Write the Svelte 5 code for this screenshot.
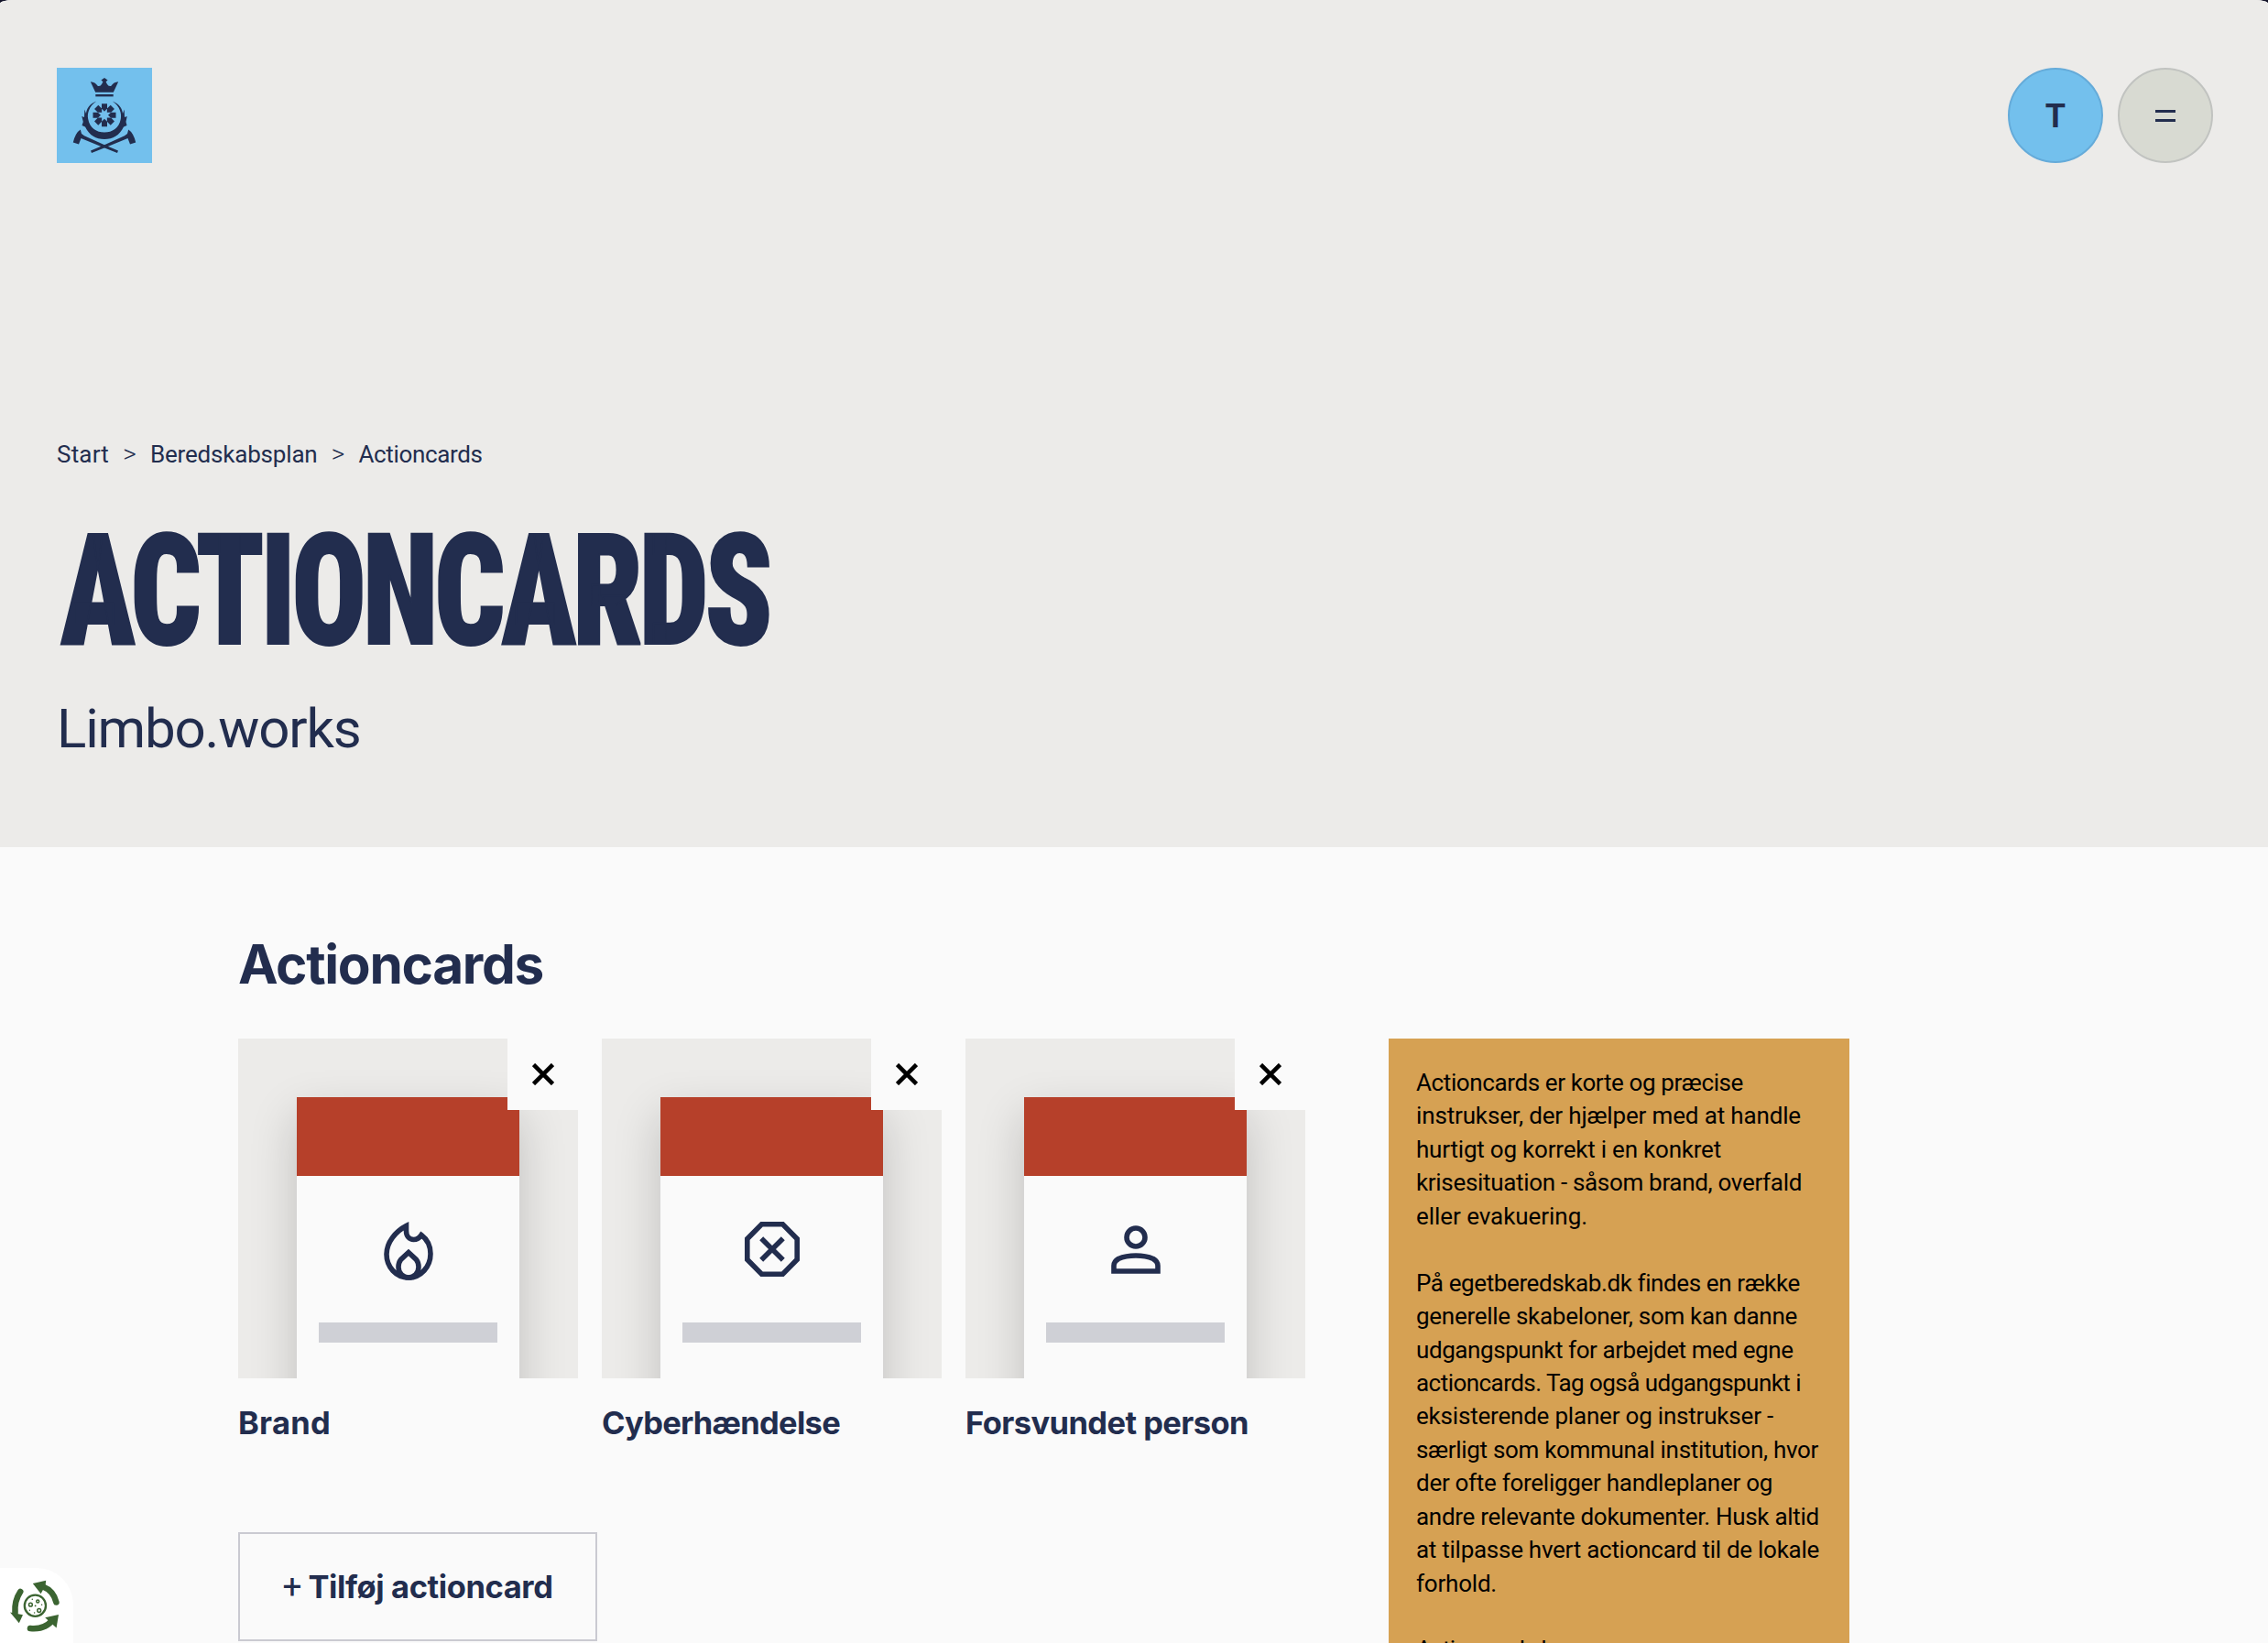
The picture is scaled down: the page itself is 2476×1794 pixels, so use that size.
<script>
  const crumbs = [
    { label: 'Start', width: 57 },
    { label: 'Beredskabsplan', width: 182.5 },
    { label: 'Actioncards', width: 135 }
  ];

  const cards = [
    { title: 'Brand', width: 101, icon: 'fire' },
    { title: 'Cyberhændelse', width: 260, icon: 'danger' },
    { title: 'Forsvundet person', width: 309, icon: 'person' }
  ];

  const paragraphs = [
    [
      ['Actioncards er korte og præcise', 357],
      ['instrukser, der hjælper med at handle', 420],
      ['hurtigt og korrekt i en konkret', 333],
      ['krisesituation - såsom brand, overfald', 421],
      ['eller evakuering.', 187]
    ],
    [
      ['På egetberedskab.dk findes en række', 418],
      ['generelle skabeloner, som kan danne', 416],
      ['udgangspunkt for arbejdet med egne', 411.5],
      ['actioncards. Tag også udgangspunkt i', 420],
      ['eksisterende planer og instrukser -', 390],
      ['særligt som kommunal institution, hvor', 439],
      ['der ofte foreligger handleplaner og', 389],
      ['andre relevante dokumenter. Husk altid', 440],
      ['at tilpasse hvert actioncard til de lokale', 440],
      ['forhold.', 88]
    ],
    [['Actioncards kan', 176]]
  ];

  // Tracks a text run so that it fills the given advance width.
  function track(node, width) {
    const natural = node.getBoundingClientRect().width;
    const count = node.textContent.length;
    node.style.letterSpacing = `${(width - natural) / count}px`;
  }

  // Condenses a display line horizontally to the given width.
  function condense(node, width) {
    const natural = node.getBoundingClientRect().width;
    node.style.transform = `scaleX(${width / natural})`;
  }
</script>

<main class="page">
  <header class="hero">
    <div class="topbar">
      <a class="logo" href="#start" aria-label="Forside">
        <svg viewBox="0 0 104 104" fill="#222d4e">
          <path d="M36.8 15.2 Q42 15.6 44.6 19.8 Q47.4 21 49.3 17.6 L50.4 15.2 L48.4 13.4 L52 11 L55.6 13.4 L53.6 15.2 L54.7 17.6 Q56.6 21 59.4 19.8 Q62 15.6 67.2 15.2 L61.8 26.8 H42.2 Z" />
          <rect x="42.3" y="29" width="19.4" height="2.4" />
          <path d="M43.2 36.4 C35 42 33 50 34.2 56 C36 66 43.5 70.5 52 70.5 C60.5 70.5 68 66 69.8 56 C71 50 69 42 60.8 36.4 C68 39.5 71.5 44 72 50 L73.7 45.5 L74 54 L76.7 53 L75.5 59 L76.5 63 L73 64.5 C68.5 74 61 78 52 78 C43 78 35.5 74 31 64.5 L27.5 63 L28.8 59 L27.3 53 L30 54 L30.3 45.5 L32 50 C32.5 44 36 39.5 43.2 36.4 Z" />
          {#each [0, 45, 90, 135, 180, 225, 270, 315] as a}
            <path d="M49 39.2 H55 V44.6 L52 47.7 L49 44.6 Z" transform="rotate({a} 52 51.7)" />
          {/each}
          <g id="axe">
            <path d="M25.8 67.6 L27 72 L30 74.2 L51 83.8 L67 90.5 L66 93 L49 86.2 L26.5 77 L24 83.6 L17.8 81.4 Q20.5 71 25.8 67.6 Z" />
          </g>
          <use href="#axe" transform="matrix(-1 0 0 1 104 0)" />
        </svg>
      </a>
      <nav class="actions">
        <button class="round user">T</button>
        <button class="round menu" aria-label="Menu"><i></i><i></i></button>
      </nav>
    </div>

    <nav class="crumbs">
      {#each crumbs as crumb, i}
        {#if i > 0}<span class="sep">&gt;</span>{/if}
        <span use:track={crumb.width}>{crumb.label}</span>
      {/each}
    </nav>

    <h1><span use:condense={774}>ACTIONCARDS</span></h1>
    <p class="sub"><span use:track={331.5}>Limbo.works</span></p>
  </header>

  <div class="content">
    <section class="main">
      <h2><span use:track={333}>Actioncards</span></h2>
      <div class="grid">
        {#each cards as card}
          <article>
            <div class="thumb">
              <div class="doc">
                <div class="band"></div>
                <svg class="icon" viewBox="0 0 72 72">
                  {#if card.icon === 'fire'}
                    <path d="M33.5 10.5 C33.5 12 33.5 13 33.5 16 C33.5 22 37 25.5 41.5 25.500 C45 25.500 47.5 24.5 50 20.5 C56 25 60 32 60 41 C60 55 49.5 67 36 67 C22.5 67 12 55.5 12 41.5 C12 28.500 22 16.500 33.5 10.5 Z" />
                    <path d="M36 39.5 L27.5 47.5 C25.5 50 25 52 25 55.5 C25 62 30 67 36 67 C42 67 47 62 47 55.5 C47 52 46.5 50 44.5 47.5 Z" />
                  {:else if card.icon === 'danger'}
                    <path d="M24.5 8.8 H47.5 L63.2 24.7 V47.3 L47.5 63.2 H24.5 L8.8 47.3 V24.7 Z" />
                    <path d="M24.2 24.2 L47.8 47.8 M47.8 24.2 L24.2 47.8" />
                  {:else}
                    <circle cx="36" cy="23" r="10" />
                    <path d="M12 60 V54 Q12 49.5 17 46.5 Q25 43 36 43 Q47 43 55 46.5 Q60 49.5 60 54 V60 Z" />
                  {/if}
                </svg>
                <div class="line"></div>
              </div>
              <button class="close" aria-label="Fjern">
                <svg viewBox="0 0 24 24"><path d="M1.5 1.5 L22.5 22.5 M22.5 1.5 L1.5 22.5" /></svg>
              </button>
            </div>
            <h3><span use:track={card.width}>{card.title}</span></h3>
          </article>
        {/each}
      </div>
      <button class="add"><span class="plus">+</span><span use:track={267}>Tilføj actioncard</span></button>
    </section>

    <aside>
      {#each paragraphs as lines}
        <p>
          {#each lines as [text, width]}
            <span class="row"><span use:track={width}>{text}</span></span>
          {/each}
        </p>
      {/each}
    </aside>
  </div>

  <div class="cookie">
    <svg viewBox="0 0 80 82" fill="none" stroke="#3b6431">
      <circle cx="38.4" cy="41.2" r="11.6" stroke-width="2.3" />
      <g stroke-width="1.5">
        <circle cx="33.4" cy="40.2" r="1.9" />
        <circle cx="41.2" cy="36.6" r="1.5" />
        <circle cx="42.7" cy="46.5" r="1.9" />
      </g>
      <g fill="#3b6431" stroke="none">
        <circle cx="35.3" cy="34.3" r=".8" /><circle cx="38.6" cy="41.4" r=".9" />
        <circle cx="45.6" cy="40.2" r=".8" /><circle cx="37.6" cy="49" r=".8" />
        <circle cx="32.4" cy="46.2" r=".7" />
        <path d="M35.8 17 L50.2 13.8 L49.6 19 L44.6 28.2 Z" />
        <path d="M11 48.6 L25 51.2 L20.8 60.2 Z" />
        <path d="M49.2 54.2 L64 51 L61.6 65.6 Z" />
      </g>
      <g stroke-width="6.6" stroke-linecap="round">
        <path d="M47 20.5 Q58.5 25 61.4 37.5" />
        <path d="M22.2 26 Q15.5 36 16.5 49" />
        <path d="M33 66 Q48 67.5 56.5 58" />
      </g>
    </svg>
  </div>
</main>

<style>
  :global(body) { background: #14142a; }
  .page {
    position: relative;
    height: 1794px;
    overflow: hidden;
    background: #fafafa;
    color: #222d4e;
    font-family: Roboto, 'Liberation Sans', sans-serif;
    border-radius: 14px 14px 0 0 / 4px 4px 0 0;
  }
  h1, h2, h3, p { margin: 0; }
  span { display: inline-block; white-space: nowrap; }
  button { font: inherit; color: inherit; padding: 0; cursor: pointer; }

  .hero { box-sizing: border-box; height: 925px; padding: 74px 60px 0 62px; background: #ecebe9; }
  .topbar { display: flex; justify-content: space-between; height: 104px; }
  .logo { width: 104px; height: 104px; background: #73c0ed; }
  .logo svg { display: block; width: 104px; height: 104px; }
  .actions { display: flex; gap: 16px; }
  .round {
    box-sizing: border-box;
    width: 104px;
    height: 104px;
    border-radius: 50%;
    display: flex;
    align-items: center;
    justify-content: center;
  }
  .user { background: #73c0ed; border: 2px solid #65abd9; font-family: Inter, Roboto, sans-serif; font-size: 35px; font-weight: 700; line-height: 42px; }
  .menu { background: #d8dad2; border: 2px solid #c1c3c0; flex-direction: column; gap: 7px; }
  .menu i { width: 22px; height: 3px; background: #222d4e; }

  .crumbs { display: flex; gap: 14.5px; margin-top: 300px; font-size: 26px; line-height: 36px; }
  .sep { width: 16px; text-align: center; font-size: 28px; font-weight: 300; }
  h1 { margin-top: 46px; padding-left: 4px; font-size: 169px; line-height: 170px; font-weight: 900; }
  h1 span {
    font-family: 'Roboto Condensed', Roboto, sans-serif;
    letter-spacing: -5px;
    -webkit-text-stroke: 2px #222d4e;
    transform-origin: left;
  }
  .sub { margin-top: 30px; font-size: 60px; line-height: 72px; }

  .content { display: flex; align-items: flex-start; gap: 91px; padding-left: 260px; }
  .main { width: 1165px; padding-top: 92px; }
  h2 { font-family: Inter, Roboto, sans-serif; font-size: 58.5px; line-height: 72px; font-weight: 700; }
  .grid { display: grid; grid-template-columns: repeat(3, 1fr); gap: 26px; margin-top: 45px; }
  .thumb {
    position: relative;
    display: flex;
    justify-content: center;
    height: 371px;
    box-sizing: border-box;
    padding-top: 64px;
    overflow: hidden;
    background: #ecebe9;
  }
  .doc {
    width: 243px;
    height: 400px;
    display: flex;
    flex-direction: column;
    align-items: center;
    background: #fafafa;
    box-shadow: 0 20px 48px rgba(0, 0, 0, 0.19);
  }
  .band { flex: none; width: 100%; height: 86px; background: #b6402a; }
  .icon { flex: none; width: 72px; height: 72px; margin-top: 44px; fill: none; stroke: #222d4e; stroke-width: 5.6; }
  .line { flex: none; width: 195px; height: 22px; margin-top: 44px; background: #cfd0d6; }
  .close {
    position: absolute;
    top: 0;
    right: 0;
    width: 77px;
    height: 78px;
    border: 0;
    background: #fafafa;
    display: flex;
    align-items: center;
    justify-content: center;
  }
  .close svg { width: 24px; height: 24px; stroke: #000; stroke-width: 4.6; }
  h3 { margin-top: 27px; font-family: Inter, Roboto, sans-serif; font-size: 34.5px; line-height: 44px; font-weight: 700; }
  .add {
    box-sizing: border-box;
    width: 392px;
    height: 119px;
    margin-top: 97px;
    border: 2px solid #cacad1;
    background: none;
    display: flex;
    align-items: center;
    justify-content: center;
    gap: 7px;
    font-family: Inter, Roboto, sans-serif;
    font-size: 34.5px;
    font-weight: 700;
  }
  .plus { font-family: Roboto, sans-serif; font-size: 37px; font-weight: 400; }

  aside {
    box-sizing: border-box;
    width: 503px;
    height: 700px;
    margin-top: 209px;
    padding: 30px;
    background: #d6a153;
    color: #000;
    font-size: 26px;
    line-height: 36.45px;
  }
  aside p + p { margin-top: 36.45px; }
  .row { display: block; height: 36.45px; }

  .cookie {
    position: absolute;
    left: 0;
    bottom: 0;
    width: 80px;
    height: 82px;
    background: #fff;
    border-top-right-radius: 40px;
  }
  .cookie svg { display: block; width: 80px; height: 82px; }
</style>
